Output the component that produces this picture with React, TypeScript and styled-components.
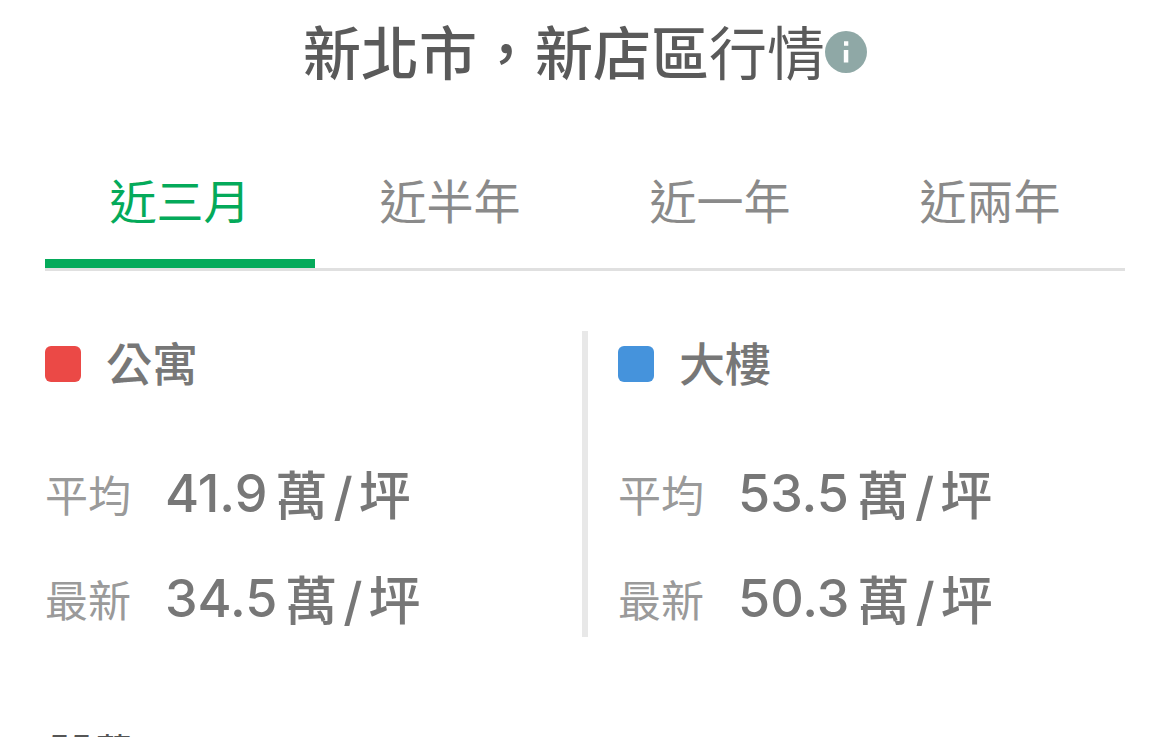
import React, { useState } from "react";
import styled, { createGlobalStyle } from "styled-components";

const GlobalStyle = createGlobalStyle`
  * { box-sizing: border-box; }
  html, body { margin: 0; height: 100%; overflow: hidden; }
  body {
    background: #fff;
    font-family: Inter, "Noto Sans CJK TC", sans-serif;
  }
  #root { height: 100%; }
`;

const Page = styled.main`
  padding: 12px 45px 0;
`;

const Title = styled.h1`
  display: flex;
  align-items: center;
  justify-content: center;
  margin: 0;
  font-size: 58px;
  line-height: 80px;
  font-weight: 400;
  color: #5a5a5a;
  white-space: nowrap;
`;

const TitleText = styled.span`
  padding-top: 4px;
  line-height: 76px;
`;

const Region = styled.strong`
  font-weight: 500;
`;

const InfoButton = styled.button`
  display: flex;
  width: 42px;
  height: 42px;
  padding: 0;
  border: 0;
  border-radius: 50%;
  background: none;
`;

const Tabs = styled.div`
  display: grid;
  grid-template-columns: repeat(4, 1fr);
  margin-top: 44px;
  padding-bottom: 3px;
  box-shadow: inset 0 -3px #e0e0e0;
`;

const Tab = styled.button<{ $active: boolean }>`
  height: 132px;
  padding: 8px 0 0;
  border: 0;
  border-bottom: 9px solid ${(p) => (p.$active ? "#04aa5a" : "transparent")};
  background: none;
  font: inherit;
  font-size: 47px;
  line-height: 68px;
  color: ${(p) => (p.$active ? "#04aa5a" : "#8a8a8a")};
`;

const Summary = styled.div`
  display: grid;
  grid-template-columns: 1fr 1fr;
  margin-top: 60px;
`;

const Category = styled.section`
  height: 306px;
  & + & {
    margin-left: -3px;
    padding-left: 30px;
    border-left: 6px solid #e8e8e8;
  }
`;

const CategoryName = styled.h2`
  display: flex;
  align-items: center;
  gap: 25px;
  margin: 0 0 44px;
  font-size: 46px;
  line-height: 66px;
  font-weight: 500;
  color: #777;
`;

const Swatch = styled.span<{ $color: string }>`
  width: 36px;
  height: 36px;
  border-radius: 6px;
  background: ${(p) => p.$color};
`;

const Prices = styled.dl`
  margin: 0;
`;

const PriceRow = styled.div`
  display: flex;
  align-items: center;
  gap: 34px;
  height: 105px;
`;

const PriceLabel = styled.dt`
  padding-bottom: 2px;
  font-size: 43px;
  color: #9a9a9a;
`;

const Price = styled.dd`
  display: flex;
  align-items: center;
  gap: 8px;
  margin: 0;
  font-size: 52px;
  font-weight: 500;
  color: #777;
`;

const Unit = styled.span`
  display: flex;
  align-items: baseline;
  gap: 6px;
  padding-bottom: 3px;
`;

const AxisLabel = styled.p`
  display: flex;
  gap: 4px;
  margin: 85px 0 0;
  padding-left: 3px;
  font-size: 36px;
  line-height: 52px;
  color: #555;
`;

const AxisUnit = styled.span`
  padding-top: 4px;
`;

const periods = ["近三月", "近半年", "近一年", "近兩年"];
const categories = [
  { name: "公寓", color: "#eb4946", average: "41.9", latest: "34.5" },
  { name: "大樓", color: "#4593dc", average: "53.5", latest: "50.3" },
];

function PriceLine({ label, value }: { label: string; value: string }) {
  return (
    <PriceRow>
      <PriceLabel>{label}</PriceLabel>
      <Price>
        <span>{value}</span>
        <Unit>
          <span>萬</span>
          <span>/</span>
          <span>坪</span>
        </Unit>
      </Price>
    </PriceRow>
  );
}

export default function App() {
  const [period, setPeriod] = useState(0);
  return (
    <Page lang="zh-Hant">
      <GlobalStyle />
      <Title>
        <TitleText>
          <Region>新北市，新店區</Region>行情
        </TitleText>
        <InfoButton aria-label="說明">
          <svg width="42" height="42" viewBox="0 0 42 42" aria-hidden="true">
            <circle cx="21" cy="21" r="21" fill="#8fa8a6" />
            <path d="M19 10.3h4.3v4.4H19zM18.8 19h4.5v12.6h-4.5z" fill="#fff" />
          </svg>
        </InfoButton>
      </Title>
      <Tabs role="tablist">
        {periods.map((label, i) => (
          <Tab
            key={label}
            role="tab"
            aria-selected={i === period}
            $active={i === period}
            onClick={() => setPeriod(i)}
          >
            {label}
          </Tab>
        ))}
      </Tabs>
      <Summary>
        {categories.map((c) => (
          <Category key={c.name}>
            <CategoryName>
              <Swatch $color={c.color} />
              {c.name}
            </CategoryName>
            <Prices>
              <PriceLine label="平均" value={c.average} />
              <PriceLine label="最新" value={c.latest} />
            </Prices>
          </Category>
        ))}
      </Summary>
      <AxisLabel>
        <span>55</span>
        <AxisUnit>萬</AxisUnit>
      </AxisLabel>
    </Page>
  );
}
